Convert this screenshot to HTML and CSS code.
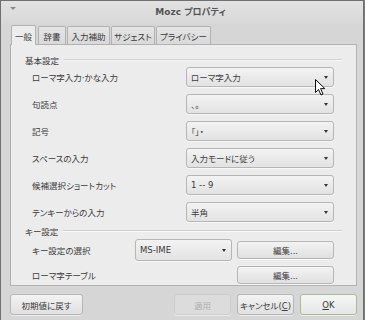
FILE: index.html
```html
<!DOCTYPE html>
<html lang="ja">
<head>
    <meta charset="UTF-8">
    <title>Mozc プロパティ</title>
    <link rel="stylesheet" href="styles.css">
</head>
<body>
    <div class="window">
        <div class="titlebar">
            <span class="menu-arrow"></span>
            <span class="title">Mozc プロパティ</span>
        </div>

        <div class="tabs">
            <div class="tab active t1">一般</div>
            <div class="tab t2">辞書</div>
            <div class="tab t3">入力補助</div>
            <div class="tab t4">サジェスト</div>
            <div class="tab t5">プライバシー</div>
        </div>

        <div class="panel">
            <div class="group-head"><span>基本設定</span><i></i></div>
            <div class="row">
                <span class="label">ローマ字入力·かな入力</span>
                <div class="combo">ローマ字入力</div>
            </div>
            <div class="row">
                <span class="label">句読点</span>
                <div class="combo">、。</div>
            </div>
            <div class="row">
                <span class="label">記号</span>
                <div class="combo">「」・</div>
            </div>
            <div class="row">
                <span class="label">スペースの入力</span>
                <div class="combo">入力モードに従う</div>
            </div>
            <div class="row">
                <span class="label">候補選択ショートカット</span>
                <div class="combo">1 -- 9</div>
            </div>
            <div class="row">
                <span class="label">テンキーからの入力</span>
                <div class="combo">半角</div>
            </div>

            <div class="group-head key-head"><span>キー設定</span><i></i></div>
            <div class="key-row">
                <span class="label key-label">キー設定の選択</span>
                <div class="combo small">MS-IME</div>
                <button class="btn edit">編集...</button>
            </div>
            <div class="key-row second">
                <span class="label">ローマ字テーブル</span>
                <button class="btn edit">編集...</button>
            </div>
        </div>

        <div class="footer">
            <button class="btn reset">初期値に戻す</button>
            <span class="spacer"></span>
            <button class="btn apply" disabled>適用</button>
            <button class="btn cancel">キャンセル(<u>C</u>)</button>
            <button class="btn ok"><u>O</u>K</button>
        </div>

        <svg class="cursor" width="11" height="17" viewBox="0 0 11 17">
            <path d="M0.5 0.5 L0.5 13.5 L3.5 10.5 L6 16 L8 15 L5.6 9.6 L9.8 9.6 Z" fill="#fff" stroke="#111" stroke-width="1" stroke-linejoin="round"/>
        </svg>
    </div>
</body>
</html>
```

FILE: styles.css
```css
/* Reset */
* {
    margin: 0;
    padding: 0;
    box-sizing: border-box;
}

body {
    font-family: 'DejaVu Sans', 'Noto Sans CJK JP', sans-serif;
    font-size: 8.5px;
    font-feature-settings: "palt";
    color: #3a3a3a;
    background: #7a7a7a;
}

/* Window frame */
.window {
    position: relative;
    width: 364px;
    height: 320px;
    background-color: #d6d6d6;
    border: 1px solid #707070;
    border-bottom: none;
    display: flex;
    flex-direction: column;
}

.titlebar {
    height: 23px;
    flex-shrink: 0;
    display: flex;
    align-items: center;
    justify-content: center;
    position: relative;
    background: linear-gradient(to bottom, #e2e2e2, #d8d8d8);
}

.menu-arrow {
    position: absolute;
    left: 9px;
    top: 6px;
    width: 0;
    height: 0;
    border-left: 3px solid transparent;
    border-right: 3px solid transparent;
    border-top: 3px solid #8a8a8a;
}

.title {
    margin-left: 17px;
    margin-top: -2px;
    font-size: 9px;
    color: #555;
    font-weight: bold;
}

/* Tabs */
.tabs {
    display: flex;
    align-items: flex-end;
    height: 19px;
    margin-top: 1px;
    margin-left: 10px;
    position: relative;
    z-index: 2;
}

.tab {
    height: 18px;
    margin-right: 1px;
    display: flex;
    align-items: center;
    justify-content: center;
    white-space: nowrap;
    border: 1px solid #b2b2b2;
    border-bottom: none;
    border-radius: 2px 2px 0 0;
    background: linear-gradient(to bottom, #e4e4e4, #d9d9d9);
    color: #3a3a3a;
}

.tab.active {
    height: 20px;
    margin-bottom: -1px;
    background: #ececec;
}

.t1 { width: 25px; margin-right: 2px; }
.t2 { width: 28px; }
.t3 { width: 43px; }
.t4 { width: 44px; }
.t5 { width: 55px; }

/* Main panel */
.panel {
    margin-left: 9px;
    width: 347px;
    height: 242px;
    background-color: #ececec;
    border: 1px solid #b2b2b2;
    padding: 9px 14px 0 14px;
    display: flex;
    flex-direction: column;
}

.group-head {
    display: flex;
    align-items: center;
    height: 12px;
    margin-bottom: 1px;
}

.group-head i {
    flex: 1;
    margin-left: 5px;
    border-top: 1px solid #d2d2d2;
    border-bottom: 1px solid #f8f8f8;
}

.key-head {
    margin-top: -4px;
    margin-bottom: 2px;
}

.row {
    display: flex;
    align-items: center;
    height: 20px;
    margin-bottom: 7px;
    padding-left: 7px;
    padding-right: 8px;
}

.row .label {
    flex: 1;
}

.combo {
    width: 148px;
    height: 20px;
    padding-left: 4px;
    display: flex;
    align-items: center;
    position: relative;
    border: 1px solid #b6b6b6;
    border-radius: 3px;
    background: linear-gradient(to bottom, #f3f3f3, #e2e2e2);
    box-shadow: 0 1px 0 rgba(255, 255, 255, 0.6);
}

.combo::after {
    content: '';
    position: absolute;
    right: 5px;
    top: 8px;
    border-left: 2.5px solid transparent;
    border-right: 2.5px solid transparent;
    border-top: 3px solid #333;
}

.key-row {
    display: flex;
    align-items: center;
    height: 22px;
    padding-left: 7px;
    padding-right: 8px;
}

.key-row.second {
    height: 18px;
    margin-top: 5px;
}

.key-label {
    width: 103px;
}

.second .label {
    flex: 1;
}

.combo.small {
    width: 97px;
    height: 22px;
}

.combo.small::after {
    top: 9px;
}

/* Buttons */
.btn {
    font-family: inherit;
    font-size: 8.5px;
    font-feature-settings: "palt";
    color: #3a3a3a;
    height: 21px;
    padding: 0;
    white-space: nowrap;
    border: 1px solid #b6b6b6;
    border-radius: 3px;
    background: linear-gradient(to bottom, #f3f3f3, #e0e0e0);
    box-shadow: 0 1px 0 rgba(255, 255, 255, 0.5);
}

.btn u {
    text-decoration: underline;
}

.btn.edit {
    width: 97px;
    height: 18px;
    margin-left: auto;
}

.footer {
    display: flex;
    align-items: center;
    margin-top: 8px;
    margin-left: 9px;
    width: 347px;
}

.spacer {
    flex: 1;
}

.reset {
    width: 73px;
}

.apply {
    width: 57px;
    color: #b0b0b0;
    border-color: #cdcdcd;
    background: #dcdcdc;
}

.cancel {
    width: 57px;
    margin-left: 6px;
}

.ok {
    width: 57px;
    margin-left: 6px;
    border-color: #a9bd95;
    background: linear-gradient(to bottom, #f6f6f6, #e6e6e6);
}

.cursor {
    position: absolute;
    left: 314px;
    top: 78px;
}
```
